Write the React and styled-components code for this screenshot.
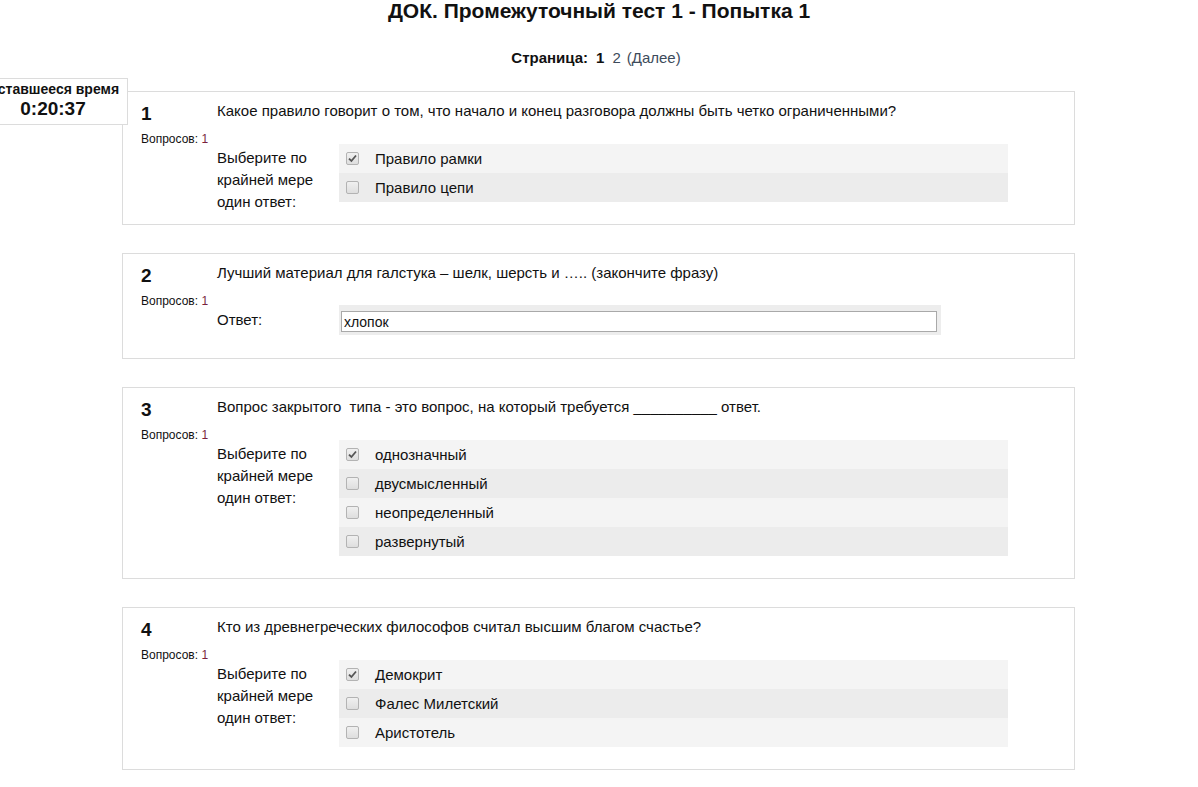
import * as React from 'react';
import styled, { createGlobalStyle } from 'styled-components';

const GlobalStyle = createGlobalStyle`
  html, body {
    margin: 0;
    padding: 0;
    background: #ffffff;
    font-family: "Liberation Sans", Arial, sans-serif;
    color: #111;
  }
`;

const Page = styled.div`
  width: 1198px;
  min-height: 787px;
  position: relative;
  overflow: hidden;
`;

const Title = styled.h2`
  margin: 0;
  font-size: 21px;
  line-height: 22px;
  font-weight: bold;
  text-align: center;
`;

const Paging = styled.div`
  margin-top: 27px;
  text-align: center;
  font-size: 15px;
  line-height: 18px;

  strong { margin-right: 8px; }
  b { margin-right: 8px; }
`;

const PageLink = styled.span`
  color: #3d4b5b;
  margin-right: 6px;
`;

const Timer = styled.div`
  position: absolute;
  left: -22px;
  top: 78px;
  width: 148px;
  height: 45px;
  border: 1px solid #dcdcdc;
  background: #fff;
  text-align: center;
  font-weight: bold;
`;

const TimerLabel = styled.div`
  font-size: 14px;
  line-height: 17px;
  margin-top: 2px;
  white-space: nowrap;
`;

const TimerValue = styled.div`
  font-size: 19px;
  line-height: 22px;
`;

const List = styled.div`
  display: flex;
  flex-direction: column;
  align-items: flex-start;
  gap: 28px;
  margin-top: 24px;
  padding: 0 0 20px 122px;
`;

const Card = styled.div`
  width: 953px;
  border: 1px solid #dcdcdc;
  padding: 10px 18px ${(p) => p.pb || 22}px 18px;
  box-sizing: border-box;
  display: grid;
  grid-template-columns: 76px 1fr;
`;

const Info = styled.div`
  display: flex;
  flex-direction: column;
`;

const Num = styled.div`
  font-size: 19px;
  font-weight: bold;
  line-height: 24px;
`;

const Grade = styled.div`
  margin-top: 6px;
  font-size: 12px;
  line-height: 14px;
  color: #111;

  span { color: #7a1f3d; }
`;

const Body = styled.div`
  display: flex;
  flex-direction: column;
`;

const QText = styled.div`
  font-size: 15px;
  line-height: 18px;
  color: #111;
  white-space: pre;
`;

const Answer = styled.div`
  display: flex;
  align-items: flex-start;
  margin-top: ${(p) => p.gap || 24}px;
`;

const Prompt = styled.div`
  width: 122px;
  height: ${(p) => p.h || 58}px;
  flex: none;
  font-size: 15px;
  line-height: 22px;
  padding-top: ${(p) => p.top || 3}px;
  box-sizing: border-box;
`;

const Options = styled.div`
  width: 669px;
  display: flex;
  flex-direction: column;
`;

const Option = styled.div`
  height: 29px;
  display: flex;
  align-items: center;
  padding-left: 7px;
  background: ${(p) => (p.odd ? '#ececec' : '#f4f4f4')};
  font-size: 15px;
  color: #111;
`;

const Box = styled.span`
  width: 11px;
  height: 11px;
  border: 1px solid #b3b3b3;
  border-radius: 2px;
  background: linear-gradient(#f0f0f0, #dedede);
  margin-right: 16px;
  display: flex;
  align-items: center;
  justify-content: center;
  flex: none;
`;

const InputRow = styled.div`
  width: 602px;
  height: 30px;
  background: #ededed;
  padding: 6px 5px 0 2px;
  box-sizing: border-box;
`;

const TextInput = styled.input`
  width: 596px;
  height: 21px;
  box-sizing: border-box;
  border: 1px solid #a9a9a9;
  padding: 0 2px;
  font-family: "Liberation Sans", Arial, sans-serif;
  font-size: 14px;
  color: #111;
  background: #fff;
  outline: none;
`;

const Check = () => (
  <svg width="9" height="9" viewBox="0 0 9 9">
    <path d="M1 4.6 L3.4 7 L8 1.5" fill="none" stroke="#555" strokeWidth="1.8" />
  </svg>
);

const questions = [
  {
    n: 1,
    text: 'Какое правило говорит о том, что начало и конец разговора должны быть четко ограниченными?',
    options: ['Правило рамки', 'Правило цепи'],
  },
  {
    n: 2,
    text: 'Лучший материал для галстука – шелк, шерсть и ….. (закончите фразу)',
    input: 'хлопок',
  },
  {
    n: 3,
    text: 'Вопрос закрытого  типа - это вопрос, на который требуется __________ ответ.',
    options: ['однозначный', 'двусмысленный', 'неопределенный', 'развернутый'],
  },
  {
    n: 4,
    text: 'Кто из древнегреческих философов считал высшим благом счастье?',
    options: ['Демокрит', 'Фалес Милетский', 'Аристотель'],
  },
];

const Question = ({ q }) => (
  <Card pb={q.input ? 23 : 22}>
    <Info>
      <Num>{q.n}</Num>
      <Grade>
        Вопросов: <span>1</span>
      </Grade>
    </Info>
    <Body>
      <QText>{q.text}</QText>
      {q.input ? (
        <Answer gap={23}>
          <Prompt top={4} h={30}>Ответ:</Prompt>
          <InputRow>
            <TextInput defaultValue={q.input} readOnly />
          </InputRow>
        </Answer>
      ) : (
        <Answer>
          <Prompt>
            Выберите по
            <br />
            крайней мере
            <br />
            один ответ:
          </Prompt>
          <Options>
            {q.options.map((o, i) => (
              <Option key={o} odd={i % 2 === 1}>
                <Box>{i === 0 && <Check />}</Box>
                {o}
              </Option>
            ))}
          </Options>
        </Answer>
      )}
    </Body>
  </Card>
);

const App = () => (
  <Page>
    <GlobalStyle />
    <Title>ДОК. Промежуточный тест 1 - Попытка 1</Title>
    <Paging>
      <strong>Страница:</strong>
      <b>1</b>
      <PageLink>2</PageLink>
      <PageLink>(Далее)</PageLink>
    </Paging>
    <Timer>
      <TimerLabel>Оставшееся время</TimerLabel>
      <TimerValue>0:20:37</TimerValue>
    </Timer>
    <List>
      {questions.map((q) => (
        <Question key={q.n} q={q} />
      ))}
    </List>
  </Page>
);

export default App;
